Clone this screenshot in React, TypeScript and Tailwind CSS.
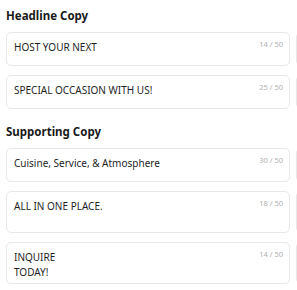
import React from 'react';

type Field = { text: string; count: number; tall?: boolean };

const headline: Field[] = [
  { text: 'HOST YOUR NEXT', count: 14 },
  { text: 'SPECIAL OCCASION WITH US!', count: 25 },
];

const supporting: Field[] = [
  { text: 'Cuisine, Service, & Atmosphere', count: 30 },
  { text: 'ALL IN ONE PLACE.', count: 18, tall: true },
  { text: 'INQUIRE\nTODAY!', count: 14, tall: true },
];

function CopyField({ field }: { field: Field }) {
  return (
    <div className="flex gap-[6px]">
      <div
        className={`relative w-[284px] shrink-0 rounded-[5px] border border-[#e8e8e8] bg-white pl-[7px] pr-[40px] pt-[7px] ${
          field.tall ? 'h-[42px]' : 'h-[34px]'
        }`}
      >
        <div className="whitespace-pre-line text-[10px] leading-[15px] text-[#1f1f1f]">{field.text}</div>
        <span className="absolute right-[6px] top-[6px] text-[7.5px] leading-[10px] text-[#b0b0b0]">
          {field.count} / 50
        </span>
      </div>
      <div
        className={`w-[40px] shrink-0 rounded-[5px] border border-[#e8e8e8] bg-white ${
          field.tall ? 'h-[42px]' : 'h-[34px]'
        }`}
      />
    </div>
  );
}

function Section({ title, fields }: { title: string; fields: Field[] }) {
  return (
    <div className="flex flex-col">
      <h2 className="mb-[8px] text-[11.5px] font-bold leading-[16px] text-[#1a1a1a]">{title}</h2>
      <div className="flex flex-col gap-[9px]">
        {fields.map((f) => (
          <CopyField key={f.text} field={f} />
        ))}
      </div>
    </div>
  );
}

export default function App() {
  return (
    <div
      className="h-[290px] w-[297px] overflow-hidden bg-white pl-[6px] pt-[8px]"
      style={{ fontFamily: '"Noto Sans", "Open Sans", sans-serif' }}
    >
      <div className="flex flex-col gap-[15px]">
        <Section title="Headline Copy" fields={headline} />
        <Section title="Supporting Copy" fields={supporting} />
      </div>
    </div>
  );
}
